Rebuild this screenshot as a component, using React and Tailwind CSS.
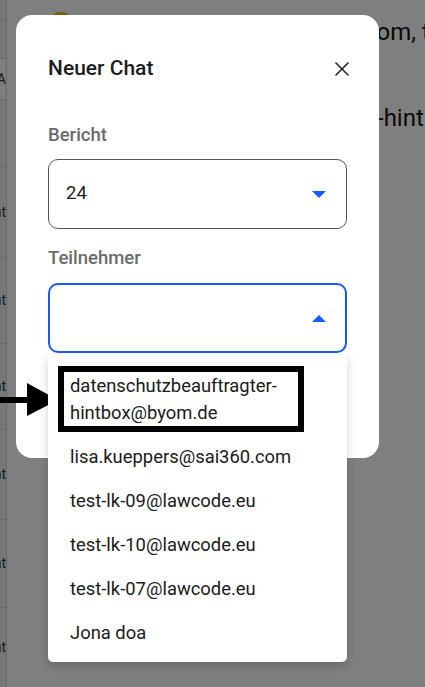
import React from "react";
import { X } from "lucide-react";

const items = [
  "lisa.kueppers@sai360.com",
  "test-lk-09@lawcode.eu",
  "test-lk-10@lawcode.eu",
  "test-lk-07@lawcode.eu",
  "Jona doa",
];

const sideItems = [
  { h: 21, t: "" },
  { h: 38, t: "" },
  { h: 41, t: "A", hl: true },
  { h: 67, t: "" },
  { h: 91, t: "Statement" },
  { h: 86, t: "Statement" },
  { h: 86, t: "Statement" },
  { h: 90, t: "Statement" },
  { h: 88, t: "Statement" },
  { h: 80, t: "Statement" },
];

export default function App() {
  return (
    <div
      className="relative w-[425px] h-[687px] overflow-hidden bg-white"
      style={{ fontFamily: "Roboto, 'Noto Sans', sans-serif" }}
    >
      {/* background page */}
      <div className="flex h-full">
        <div className="w-[7px] shrink-0 overflow-hidden bg-[#eeeeee] border-r border-[#d4d4d4] flex flex-col">
          {sideItems.map((s, i) => (
            <div
              key={i}
              className={`shrink-0 flex items-center justify-end border-b border-[#d6d6d6] text-[14px] text-[#333] ${s.hl ? "bg-[#fafafa]" : ""}`}
              style={{ height: s.h }}
            >
              <span className="whitespace-nowrap">{s.t}</span>
            </div>
          ))}
        </div>
        <div className="flex-1 flex flex-col pl-[41px] pt-[12px] overflow-hidden">
          <div className="flex items-start gap-4">
            <div className="w-[26px] h-[26px] rounded-full bg-[#d8c800] shrink-0" />
            <div className="text-[24px] leading-[30px] text-[#111] whitespace-nowrap pl-[274px] pt-[5px]">
              com, test
            </div>
          </div>
          <div className="text-[24px] leading-[30px] text-[#111] whitespace-nowrap pl-[329px] pt-[56px]">
            -hintbox
          </div>
        </div>
      </div>

      {/* overlay */}
      <div className="absolute inset-0 bg-black/50">
        <div className="ml-[16px] mt-[15px] w-[363px] h-[443px] bg-white rounded-[16px] px-[32px] pt-[40px] relative">
          <div className="flex items-center justify-between h-[28px]">
            <div className="text-[21px] font-medium text-[#1c1c1c]">Neuer Chat</div>
            <X size={24} strokeWidth={1.6} className="text-[#222] -mr-[7px]" />
          </div>

          <div className="mt-[40px] text-[18.5px] leading-[24px] font-medium text-[#6b6b6b]">Bericht</div>
          <div className="mt-[12px] h-[70px] rounded-[10px] border border-[#555] flex items-center justify-between pl-[17px] pr-[20px]">
            <span className="text-[18.5px] text-[#1c1c1c]">24</span>
            <svg width="14" height="7" viewBox="0 0 14 7">
              <polygon points="0,0 14,0 7,7" fill="#1659ff" />
            </svg>
          </div>

          <div className="mt-[17px] text-[18.5px] leading-[24px] font-medium text-[#6b6b6b]">Teilnehmer</div>
          <div className="relative mt-[13px]">
            <div className="h-[70px] rounded-[10px] border-2 border-[#1659ff] flex items-center justify-end pr-[19px]">
              <svg width="14" height="7" viewBox="0 0 14 7">
                <polygon points="0,7 14,7 7,0" fill="#1659ff" />
              </svg>
            </div>

            {/* dropdown */}
            <div className="absolute left-0 right-0 top-[72px] bg-white rounded-b-[5px] shadow-[0_4px_10px_rgba(0,0,0,0.18)] py-[8px] z-10">
              <div className="relative px-[22px] py-[8.5px] text-[18.4px] leading-[27px] text-[#1a1a1a]">
                datenschutzbeauftragter-
                <br />
                hintbox@byom.de
                <div className="absolute left-[10px] top-[3px] w-[246px] h-[66px] border-[6px] border-black" />
              </div>
              {items.map((t) => (
                <div key={t} className="px-[22px] py-[8.5px] text-[18.4px] leading-[27px] text-[#1a1a1a] whitespace-nowrap">
                  {t}
                </div>
              ))}
            </div>
          </div>
        </div>

        {/* annotation arrow */}
        <svg className="absolute left-0 top-[383px]" width="60" height="34" viewBox="0 0 60 34">
          <rect x="0" y="14" width="30" height="6" fill="#000" />
          <polygon points="27,0 58,17 27,33" fill="#000" />
        </svg>
      </div>
    </div>
  );
}
